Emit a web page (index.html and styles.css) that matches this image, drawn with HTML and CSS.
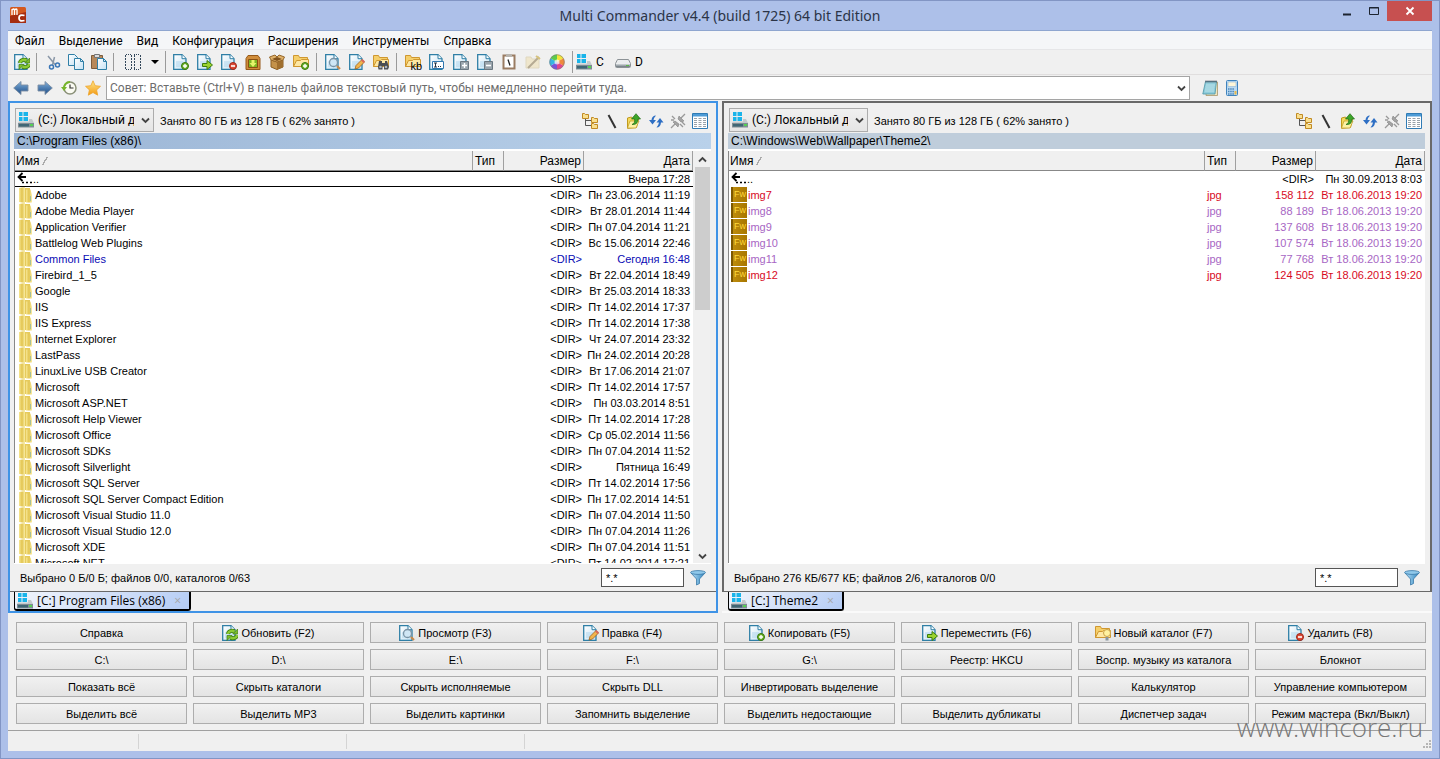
FILE: index.html
```html
<!DOCTYPE html>
<html lang="ru">
<head>
    <meta charset="UTF-8">
    <meta name="viewport" content="width=device-width, initial-scale=1.0">
    <title>Multi Commander v4.4 (build 1725) 64 bit Edition</title>
    <link rel="stylesheet" href="styles.css">
</head>
<body>
    <!-- Набор значков -->
    <svg class="sprite" aria-hidden="true">
        <defs>
            <linearGradient id="g-folder" x1="0" x2="1"><stop offset="0" stop-color="#f7e793"/><stop offset=".5" stop-color="#e2c450"/><stop offset="1" stop-color="#f9eda6"/></linearGradient>
            <linearGradient id="g-arrow" x1="0" y1="0" x2="0" y2="1"><stop offset="0" stop-color="#7fb0dc"/><stop offset="1" stop-color="#1c4b86"/></linearGradient>
            <linearGradient id="g-star" x1="0" y1="0" x2="0" y2="1"><stop offset="0" stop-color="#ffe78a"/><stop offset="1" stop-color="#f39a14"/></linearGradient>
            <linearGradient id="g-drive" x1="0" y1="0" x2="0" y2="1"><stop offset="0" stop-color="#d5dadd"/><stop offset="1" stop-color="#6b767c"/></linearGradient>
            <linearGradient id="g-doc" x1="0" y1="0" x2="1" y2="1"><stop offset="0" stop-color="#fff"/><stop offset="1" stop-color="#c4e2f4"/></linearGradient>
            <linearGradient id="g-funnel" x1="0" x2="1"><stop offset="0" stop-color="#b9e0f7"/><stop offset="1" stop-color="#2f86c0"/></linearGradient>
        </defs>
        <symbol id="doc" viewBox="0 0 16 16"><path d="M.7.7h8.300l4 4v10.600H.7z" fill="url(#g-doc)" stroke="#2f7fa6" stroke-width="1.300"/><path d="M9 .7v4h4" fill="#fff" stroke="#2f7fa6"/><path d="M3 8h7M3 10h7M3 12h7" stroke="#b0d5ec"/></symbol>
        <symbol id="folder" viewBox="0 0 16 16"><path d="M.5 1.500h5l1 2h8v9H.5z" fill="#f5cf6a" stroke="#cf9730"/><path d="M3.500 6.500h4l1-1h7v7H.5z" fill="#fde7a4" stroke="#cf9730"/></symbol>
        <symbol id="refresh" viewBox="0 0 16 16"><use href="#doc"/><g fill="none" stroke="#3b7d0c" stroke-width="4"><path d="M6 9a4 3.500 0 0 1 6.500-2.500M15 10a4 3.500 0 0 1-6.500 2.500"/></g><path d="M15.700 4v5h-5zM5 15.500v-5h5z" fill="#7dbe2a" stroke="#3b7d0c" stroke-width=".7"/><g fill="none" stroke="#8ccb34" stroke-width="2.400"><path d="M6 9a4 3.500 0 0 1 6.500-2.500M15 10a4 3.500 0 0 1-6.500 2.500"/></g></symbol>
        <symbol id="cut" viewBox="0 0 16 16"><path d="M3 2l7 8.500M9.500 3l-2 8" stroke="#8b98a8" stroke-width="1.500"/><circle cx="6.500" cy="13" r="2" fill="none" stroke="#3a76b6" stroke-width="1.500"/><circle cx="12.500" cy="11" r="2" fill="none" stroke="#3a76b6" stroke-width="1.500"/></symbol>
        <symbol id="copy" viewBox="0 0 16 16"><path d="M.5.5h6l3 3v8h-9z" fill="url(#g-doc)" stroke="#2f7fa6"/><path d="M6.500 4.500h6l3 3v8h-9z" fill="url(#g-doc)" stroke="#2f7fa6"/><path d="M12.500 4.500v3h3" fill="none" stroke="#2f7fa6"/></symbol>
        <symbol id="paste" viewBox="0 0 16 16"><path d="M.5 1.500h11v13H.5z" fill="#b8895a" stroke="#7c5c3c"/><path d="M3.500.5h5v3h-5z" fill="#ddd" stroke="#777"/><path d="M6.500 4.500h6l3 3v8h-9z" fill="url(#g-doc)" stroke="#2f7fa6"/><path d="M12.500 4.500v3h3" fill="none" stroke="#2f7fa6"/></symbol>
        <symbol id="marquee" viewBox="0 0 16 16"><path d="M.5 1v15M6.500 1v15M9.500 1v15M15.500 1v15" fill="none" stroke="#33475a" stroke-dasharray="2 1"/><path d="M1 .5h6M1 15.500h6M9 .5h6M9 15.500h6" stroke="#33475a" stroke-dasharray="1 1"/></symbol>
        <symbol id="doc-add" viewBox="0 0 16 16"><use href="#doc"/><circle cx="12" cy="12" r="3.500" fill="#6fb52c" stroke="#37760c"/><path d="M10 12h4M12 10v4" stroke="#fff" stroke-width="1.400"/></symbol>
        <symbol id="doc-move" viewBox="0 0 16 16"><use href="#doc"/><path d="M5.500 9.500h4.500v-3l5.500 4.500-5.500 4.500v-3H5.500z" fill="#9bd32f" stroke="#3d7d0c"/></symbol>
        <symbol id="doc-del" viewBox="0 0 16 16"><use href="#doc"/><circle cx="12" cy="12" r="3.500" fill="#dc4a36" stroke="#9e2618"/><path d="M10 12h4" stroke="#fff" stroke-width="1.600"/></symbol>
        <symbol id="pack" viewBox="0 0 16 16"><path d="M3 1.500h10l2 3v11H1v-11z" fill="#d08d3a" stroke="#96591a"/><path d="M3.500 5.500h9v8h-9z" fill="#7fb624" stroke="#8a5012"/><path d="M6.500 6h3v3h2L8 13 4.500 9h2z" fill="#e5f56a"/></symbol>
        <symbol id="box" viewBox="0 0 16 16"><path d="M2 6l6 2 6-2v7l-6 2.500L2 13z" fill="#c4924a" stroke="#8a5e22"/><path d="M8 8v7.500L14 13V6z" fill="#a06f2e"/><path d="M2 6L.5 3 6 1l2 2 2-2 5.500 2L14 6 8 8z" fill="#e0b26a" stroke="#94662a"/><path d="M3 5l5-2 5 2-5 2z" fill="#80521c"/></symbol>
        <symbol id="folder-add" viewBox="0 0 16 16"><use href="#folder"/><circle cx="12" cy="12" r="3.500" fill="#6fb52c" stroke="#37760c"/><path d="M10 12h4M12 10v4" stroke="#fff" stroke-width="1.400"/></symbol>
        <symbol id="view" viewBox="0 0 16 16"><use href="#doc"/><path d="M12 12l3 3" stroke="#c98a4a" stroke-width="2.200"/><circle cx="8.500" cy="8.500" r="4" fill="#cfe6f5" stroke="#7a93a5" stroke-width="1.300"/></symbol>
        <symbol id="edit" viewBox="0 0 16 16"><use href="#doc"/><path d="M6 15l1-3.500 6-6 2.500 2.500-6 6z" fill="#f2b54c" stroke="#9c5f1c" stroke-width=".8"/><path d="M12 6.500L13.500 5l2.500 2.500L14.500 9z" fill="#d9685a"/></symbol>
        <symbol id="find" viewBox="0 0 16 16"><use href="#folder"/><path d="M6 7h3v2h3V7h2l2 6-1 2.500h-4V12H9.500v3.500h-4L5 13z" fill="#4a4d52"/><circle cx="7.500" cy="13" r="1.300" fill="#aeb4bc"/><circle cx="13" cy="13" r="1.300" fill="#aeb4bc"/></symbol>
        <symbol id="rename" viewBox="0 0 16 16"><use href="#doc"/><path d="M3.500 7.500h11v7h-11z" fill="#fff" stroke="#3178b0"/><path d="M5 9h3M6.500 9v4M5 13h3M9 12.500h1M11 12.500h1" stroke="#234"/></symbol>
        <symbol id="doc-plus" viewBox="0 0 16 16"><use href="#doc"/><path d="M7.500 7.500h8v8h-8z" fill="#9aa5ad" stroke="#6b7780"/><path d="M9 11.500h5M11.500 9v5" stroke="#fff" stroke-width="1.400"/></symbol>
        <symbol id="doc-minus" viewBox="0 0 16 16"><use href="#doc"/><path d="M7.500 7.500h8v8h-8z" fill="#9aa5ad" stroke="#6b7780"/><path d="M9 11.500h5" stroke="#fff" stroke-width="1.600"/></symbol>
        <symbol id="clip" viewBox="0 0 16 16"><path d="M2.500 1.500h11v13h-11z" fill="#fff" stroke="#9a7c62" stroke-width="2"/><path d="M5 0h6v3H5z" fill="#b8b4ae"/><path d="M7 5.500l2 6" stroke="#222" stroke-width="1.300"/></symbol>
        <symbol id="wand" viewBox="0 0 16 16"><path d="M1 3h5l1 2h7v9H1z" fill="#efe6cc" stroke="#e0d8c0"/><path d="M3 14L14 3" stroke="#b5aa93" stroke-width="2"/><path d="M11 2l4 3" stroke="#d6c27c" stroke-width="2"/></symbol>
        <symbol id="wheel" viewBox="0 0 16 16"><path d="M8 8V.5A7.500 7.500 0 0 1 14.500 4.200z" fill="#f4e53a"/><path d="M8 8l6.500-3.800a7.500 7.500 0 0 1 0 7.600z" fill="#f08a3c"/><path d="M8 8l6.500 3.800A7.500 7.500 0 0 1 8 15.500z" fill="#e2468a"/><path d="M8 8v7.500a7.500 7.500 0 0 1-6.500-3.700z" fill="#7a52d8"/><path d="M8 8l-6.500 3.800a7.500 7.500 0 0 1 0-7.600z" fill="#38b5e2"/><path d="M8 8L1.500 4.200A7.500 7.500 0 0 1 8 .5z" fill="#5ecb4c"/><circle cx="8" cy="8" r="2.500" fill="#fff" opacity=".7"/><circle cx="8" cy="8" r="7.300" fill="none" stroke="#777" stroke-width=".6"/></symbol>
        <symbol id="win-drive" viewBox="0 0 16 16"><path d="M1 0h3.500v4H1zM5.500 0H10v4H5.500zM1 5h3.500v4H1zM5.500 5H10v4H5.500z" fill="#19b4ea"/><path d="M11 7h3l2 4H0l1-1.500h10z" fill="#c3c9cc"/><path d="M0 11h16v4.500H0z" fill="#7f8c94"/><path d="M1 12h10v2.500H1z" fill="#3f6675"/><path d="M12 12h3v2h-3z" fill="#54d053"/></symbol>
        <symbol id="drive" viewBox="0 0 16 16"><path d="M2.500 5.500h11l2 4v3q0 1-1 1h-13q-1 0-1-1v-3z" fill="#eceeef" stroke="#8c9296"/><path d="M1 10h14v3H1z" fill="url(#g-drive)"/><path d="M11 11.500h3" stroke="#5dbb46"/></symbol>
        <symbol id="back" viewBox="0 0 16 16"><path d="M.7 8L8 1.500V5h7v6H8v3.500z" fill="url(#g-arrow)" stroke="#7b8ca2" stroke-width=".9"/></symbol>
        <symbol id="forward" viewBox="0 0 16 16"><path d="M15.300 8L8 1.500V5H1v6h7v3.500z" fill="url(#g-arrow)" stroke="#7b8ca2" stroke-width=".9"/></symbol>
        <symbol id="history" viewBox="0 0 16 16"><circle cx="9" cy="8" r="6" fill="#fbfbf3" stroke="#8a9078" stroke-width="1.500"/><path d="M9 4.500V8h3.500" fill="none" stroke="#333" stroke-width="1.200"/><path d="M3 9A6 6 0 0 1 9 2" fill="none" stroke="#76b52b" stroke-width="2"/><path d="M0 7h6l-3 4z" fill="#76b52b"/></symbol>
        <symbol id="star" viewBox="0 0 16 16"><path d="M8 .8l2.200 4.900 5.300.6-3.900 3.600 1.100 5.300L8 12.500l-4.700 2.700 1.100-5.300L.5 6.300l5.300-.6z" fill="url(#g-star)" stroke="#eda42c" stroke-width=".8"/></symbol>
        <symbol id="notepad" viewBox="0 0 16 16"><path d="M5 2h10.500v13.500H4z" fill="#efe5c0" stroke="#a8966a" stroke-width=".8"/><path d="M3.500 1.500h11l-1.500 12.500H.8z" fill="#8fcddb" stroke="#4d94a6" stroke-width=".8"/><path d="M4 5h9M3.500 7h9M3 9h9M3 11h9" stroke="#d2edf2" stroke-width=".7"/><path d="M4 .5v2M6 .5v2M8 .5v2M10 .5v2M12 .5v2M14 .5v2" stroke="#445"/></symbol>
        <symbol id="calc" viewBox="0 0 16 16"><rect x="2.500" y=".5" width="11" height="15" rx="1" fill="#b9d9f2" stroke="#3f83bd"/><path d="M4 2h8v4.500H4z" fill="#fff6d8" stroke="#8fb6d8" stroke-width=".6"/><path d="M4 9h6M4 11.500h6M4 14h6" stroke="#4d86b8" stroke-width="1.500" stroke-dasharray="1.500 .7"/><path d="M10.500 11h2v3.500h-2z" fill="#e8b84a"/></symbol>
        <symbol id="tree" viewBox="0 0 16 16"><path d="M3.500 6v6.500H9M3.500 7.500H9" fill="none" stroke="#555"/><g fill="#f9df8e" stroke="#c08a24"><path d="M.5.5h2l1 1h3v4h-6zM9.500 4.500h2l1 1h3v4h-6zM9.500 10.500h2l1 1h3v4h-6z"/></g></symbol>
        <symbol id="slash" viewBox="0 0 16 16"><path d="M4.500 2l7 13" stroke="#333" stroke-width="2"/></symbol>
        <symbol id="up" viewBox="0 0 16 16"><path d="M1.500 5l4-1 1 1.500h6l-2 9-9 .8z" fill="#f5d95c" stroke="#c09a1e"/><path d="M4 8h9l-3 7H1.500z" fill="#fdf1a4" stroke="#c09a1e" stroke-width=".7"/><path d="M6 11.500Q9.500 10 8.500 6H5.500L10 .7 14.500 6H12q0 6-6 5.500z" fill="#3ea52a" stroke="#216d14" stroke-width=".7"/></symbol>
        <symbol id="sync" viewBox="0 0 16 16"><path d="M8 2.500Q4 2.500 3.500 7H1l3.500 4.500L8 7H5.500Q6 4.500 8 2.500z" fill="#2e6fc4"/><path d="M8.500 14.500q4 0 4.500-5h2.500L12 5 8.500 9.500H11q-.5 3-2.500 5z" fill="#2e6fc4"/></symbol>
        <symbol id="unplug" viewBox="0 0 16 16"><path d="M15 1l-4 4M1 15l4-4M2 3l3 3M1 7h3M12 9l3 3M10 11l3 3" stroke="#999" stroke-width="1.300"/><path d="M9 3l5 5-3 1-3-3zM3 9l5 5 1-3-4-3z" fill="#a3a3a3" stroke="#777" stroke-width=".5"/></symbol>
        <symbol id="grid" viewBox="0 0 16 16"><path d="M.5.5h15v15H.5z" fill="#fff" stroke="#2f7bb5"/><path d="M1 1h14v2.500H1z" fill="#4d9bd6"/><path d="M2 5.500h3M6.500 5.500h3M11 5.500h3M2 7.500h3M6.500 7.500h3M11 7.500h3M2 9.500h3M6.500 9.500h3M11 9.500h3M2 11.500h3M6.500 11.500h3M11 11.500h3M2 13.500h3M6.500 13.500h3M11 13.500h3" stroke="#99a2aa"/></symbol>
        <symbol id="row-folder" viewBox="0 0 16 16"><path d="M0 1l6-1v16l-6-1z" fill="url(#g-folder)"/><path d="M6 1h5v14H6z" fill="#e6ca5c"/><path d="M7 2.500h4.500L13 8v7.500H7z" fill="url(#g-folder)"/><path d="M11.500 9v5" stroke="#a5bf9c"/></symbol>
        <symbol id="row-up" viewBox="0 0 16 16"><path d="M9 6H2M5.500 2L1.500 6l4 4" fill="none" stroke="#000" stroke-width="1.800"/><path d="M5 11.500h2M9 11.500h2M13 11.500h2" stroke="#000" stroke-width="1.500"/></symbol>
        <symbol id="bulb" viewBox="0 0 16 16"><use href="#folder"/><circle cx="12" cy="8" r="3.500" fill="#fff1a0" stroke="#c9a24a"/><path d="M10.500 12h3v3.500h-3z" fill="#8a96a0"/></symbol>
        <symbol id="funnel" viewBox="0 0 16 16"><path d="M1 3l5.500 6v6l3-1.500V9L15 3z" fill="url(#g-funnel)" stroke="#3b7aa8" stroke-width=".8"/><ellipse cx="8" cy="2.500" rx="7.500" ry="1.900" fill="#8fc8ea" stroke="#3b7aa8" stroke-width=".8"/></symbol>
        <symbol id="chevron" viewBox="0 0 9 9"><path d="M1 2.500l3.500 3.500L8 2.500" fill="none" stroke="#444" stroke-width="1.800"/></symbol>
        <symbol id="logo" viewBox="0 0 16 16"><rect width="16" height="16" rx="1.500" fill="#d4581f"/><path d="M0 9L16 5v11H0z" fill="#a52c10"/><path d="M2 8V2M2 3q2-2 2.500 0v5M4.500 3Q7 1 7 3v5" fill="none" stroke="#fff" stroke-width="1.300"/><path d="M14.500 8.500q-5.500-1.500-5.500 2.500t5.500 2.500" fill="none" stroke="#fff" stroke-width="1.800"/></symbol>
    </svg>

    <div class="window">
        <header class="titlebar">
            <svg class="icon logo"><use href="#logo"/></svg>
            <h1>Multi Commander v4.4 (build 1725) 64 bit Edition</h1>
            <div class="window-controls">
                <button class="minimize" aria-label="Свернуть"><svg viewBox="0 0 10 10"><path d="M1 8.500h8" stroke="#1d2430" stroke-width="2"/></svg></button>
                <button class="maximize" aria-label="Развернуть"><svg viewBox="0 0 10 10"><path d="M.5 1.500h9v7h-9zM0 2h10" fill="none" stroke="#1d2430"/></svg></button>
                <button class="close" aria-label="Закрыть"><svg viewBox="0 0 10 10"><path d="M1.500 1.500l7 7M8.500 1.500l-7 7" stroke="#fff" stroke-width="1.800"/></svg></button>
            </div>
        </header>

        <main class="client">
            <nav class="menu">
                <a href="#">Файл</a>
                <a href="#">Выделение</a>
                <a href="#">Вид</a>
                <a href="#">Конфигурация</a>
                <a href="#">Расширения</a>
                <a href="#">Инструменты</a>
                <a href="#">Справка</a>
            </nav>

            <div class="toolbar">
                <button class="tool narrow" aria-label="Обновить"><svg class="icon"><use href="#refresh"/></svg></button>
                <span class="sep"></span>
                <button class="tool narrow" aria-label="Вырезать"><svg class="icon"><use href="#cut"/></svg></button>
                <button class="tool narrow" aria-label="Копировать"><svg class="icon"><use href="#copy"/></svg></button>
                <button class="tool narrow" aria-label="Вставить"><svg class="icon"><use href="#paste"/></svg></button>
                <span class="sep"></span>
                <button class="tool wide" aria-label="Выделить"><svg class="icon"><use href="#marquee"/></svg></button>
                <button class="tool drop" aria-label="Ещё"><span class="caret"></span></button>
                <span class="sep grip"></span>
                <button class="tool" aria-label="Новый файл"><svg class="icon"><use href="#doc-add"/></svg></button>
                <button class="tool" aria-label="Переместить"><svg class="icon"><use href="#doc-move"/></svg></button>
                <button class="tool" aria-label="Удалить"><svg class="icon"><use href="#doc-del"/></svg></button>
                <button class="tool" aria-label="Упаковать"><svg class="icon"><use href="#pack"/></svg></button>
                <button class="tool" aria-label="Распаковать"><svg class="icon"><use href="#box"/></svg></button>
                <button class="tool" aria-label="Новый каталог"><svg class="icon"><use href="#folder-add"/></svg></button>
                <span class="sep"></span>
                <button class="tool" aria-label="Просмотр"><svg class="icon"><use href="#view"/></svg></button>
                <button class="tool" aria-label="Правка"><svg class="icon"><use href="#edit"/></svg></button>
                <button class="tool" aria-label="Поиск"><svg class="icon"><use href="#find"/></svg></button>
                <span class="sep"></span>
                <button class="tool kb" aria-label="Размер"><svg class="icon"><use href="#folder"/></svg><span>kb</span></button>
                <button class="tool" aria-label="Переименовать"><svg class="icon"><use href="#rename"/></svg></button>
                <button class="tool" aria-label="Выделить файлы"><svg class="icon"><use href="#doc-plus"/></svg></button>
                <button class="tool" aria-label="Снять выделение"><svg class="icon"><use href="#doc-minus"/></svg></button>
                <button class="tool" aria-label="Копировать путь"><svg class="icon"><use href="#clip"/></svg></button>
                <button class="tool" aria-label="Мастер"><svg class="icon"><use href="#wand"/></svg></button>
                <button class="tool" aria-label="Цвета"><svg class="icon"><use href="#wheel"/></svg></button>
                <span class="sep grip"></span>
                <button class="tool disk"><svg class="icon"><use href="#win-drive"/></svg>C</button>
                <button class="tool disk"><svg class="icon"><use href="#drive"/></svg>D</button>
            </div>

            <div class="address">
                <button class="tool" aria-label="Назад"><svg class="icon"><use href="#back"/></svg></button>
                <button class="tool" aria-label="Вперёд"><svg class="icon"><use href="#forward"/></svg></button>
                <button class="tool" aria-label="История"><svg class="icon"><use href="#history"/></svg></button>
                <button class="tool" aria-label="Избранное"><svg class="icon"><use href="#star"/></svg></button>
                <div class="combo">
                    <input type="text" aria-label="Путь" placeholder="Совет: Вставьте (Ctrl+V) в панель файлов текстовый путь, чтобы немедленно перейти туда.">
                    <button aria-label="Список"><svg class="chevron"><use href="#chevron"/></svg></button>
                </div>
                <div class="apps">
                    <button class="tool" aria-label="Блокнот"><svg class="icon"><use href="#notepad"/></svg></button>
                    <button class="tool" aria-label="Калькулятор"><svg class="icon"><use href="#calc"/></svg></button>
                </div>
            </div>

            <div class="panels">
                <section class="panel active">
                    <div class="panel-inner">
                        <div class="panel-head">
                            <label class="disk-select">
                                <svg class="icon"><use href="#win-drive"/></svg>
                                <select aria-label="Диск"><option>(C:) Локальный диск</option></select>
                                <svg class="chevron"><use href="#chevron"/></svg>
                            </label>
                            <span class="usage">Занято 80 ГБ из 128 ГБ ( 62% занято )</span>
                            <div class="panel-tools">
                                <button aria-label="Дерево"><svg class="icon"><use href="#tree"/></svg></button>
                                <button aria-label="Корень"><svg class="icon"><use href="#slash"/></svg></button>
                                <button aria-label="Вверх"><svg class="icon"><use href="#up"/></svg></button>
                                <button aria-label="Обновить"><svg class="icon"><use href="#sync"/></svg></button>
                                <button aria-label="Отключить"><svg class="icon"><use href="#unplug"/></svg></button>
                                <button aria-label="Вид"><svg class="icon"><use href="#grid"/></svg></button>
                            </div>
                        </div>
                        <div class="path">C:\Program Files (x86)\</div>
                        <div class="list">
                            <div class="list-view">
                                <table>
                                    <thead><tr><th class="name">Имя<span class="sort"></span></th><th class="type">Тип</th><th class="size">Размер</th><th class="date">Дата</th></tr></thead>
                                    <tbody id="leftFiles"></tbody>
                                </table>
                            </div>
                            <div class="scrollbar">
                                <svg class="chevron flip"><use href="#chevron"/></svg>
                                <div class="thumb"></div>
                                <svg class="chevron"><use href="#chevron"/></svg>
                            </div>
                        </div>
                        <div class="summary">
                            <span>Выбрано 0 Б/0 Б; файлов 0/0, каталогов 0/63</span>
                            <input type="text" aria-label="Фильтр" value="*.*">
                            <button aria-label="Применить фильтр"><svg class="icon"><use href="#funnel"/></svg></button>
                        </div>
                    </div>
                    <div class="tabs">
                        <button class="tab"><svg class="icon"><use href="#win-drive"/></svg>[C:] Program Files (x86)<span class="tab-close">×</span></button>
                    </div>
                </section>

                <section class="panel">
                    <div class="panel-inner">
                        <div class="panel-head">
                            <label class="disk-select">
                                <svg class="icon"><use href="#win-drive"/></svg>
                                <select aria-label="Диск"><option>(C:) Локальный диск</option></select>
                                <svg class="chevron"><use href="#chevron"/></svg>
                            </label>
                            <span class="usage">Занято 80 ГБ из 128 ГБ ( 62% занято )</span>
                            <div class="panel-tools">
                                <button aria-label="Дерево"><svg class="icon"><use href="#tree"/></svg></button>
                                <button aria-label="Корень"><svg class="icon"><use href="#slash"/></svg></button>
                                <button aria-label="Вверх"><svg class="icon"><use href="#up"/></svg></button>
                                <button aria-label="Обновить"><svg class="icon"><use href="#sync"/></svg></button>
                                <button aria-label="Отключить"><svg class="icon"><use href="#unplug"/></svg></button>
                                <button aria-label="Вид"><svg class="icon"><use href="#grid"/></svg></button>
                            </div>
                        </div>
                        <div class="path">C:\Windows\Web\Wallpaper\Theme2\</div>
                        <div class="list">
                            <div class="list-view">
                                <table>
                                    <thead><tr><th class="name">Имя<span class="sort"></span></th><th class="type">Тип</th><th class="size">Размер</th><th class="date">Дата</th></tr></thead>
                                    <tbody id="rightFiles"></tbody>
                                </table>
                            </div>
                        </div>
                        <div class="summary">
                            <span>Выбрано 276 КБ/677 КБ; файлов 2/6, каталогов 0/0</span>
                            <input type="text" aria-label="Фильтр" value="*.*">
                            <button aria-label="Применить фильтр"><svg class="icon"><use href="#funnel"/></svg></button>
                        </div>
                    </div>
                    <div class="tabs">
                        <button class="tab"><svg class="icon"><use href="#win-drive"/></svg>[C:] Theme2<span class="tab-close">×</span></button>
                    </div>
                </section>
            </div>

            <div class="commands">
                <button>Справка</button>
                <button class="with-icon"><svg class="icon"><use href="#refresh"/></svg>Обновить (F2)</button>
                <button class="with-icon"><svg class="icon"><use href="#view"/></svg>Просмотр (F3)</button>
                <button class="with-icon"><svg class="icon"><use href="#edit"/></svg>Правка (F4)</button>
                <button class="with-icon"><svg class="icon"><use href="#doc-add"/></svg>Копировать (F5)</button>
                <button class="with-icon"><svg class="icon"><use href="#doc-move"/></svg>Переместить (F6)</button>
                <button class="with-icon"><svg class="icon"><use href="#bulb"/></svg>Новый каталог (F7)</button>
                <button class="with-icon"><svg class="icon"><use href="#doc-del"/></svg>Удалить (F8)</button>
                <button>C:\</button>
                <button>D:\</button>
                <button>E:\</button>
                <button>F:\</button>
                <button>G:\</button>
                <button>Реестр: HKCU</button>
                <button>Воспр. музыку из каталога</button>
                <button>Блокнот</button>
                <button>Показать всё</button>
                <button>Скрыть каталоги</button>
                <button>Скрыть исполняемые</button>
                <button>Скрыть DLL</button>
                <button>Инвертировать выделение</button>
                <button aria-label="Пусто"></button>
                <button>Калькулятор</button>
                <button>Управление компьютером</button>
                <button>Выделить всё</button>
                <button>Выделить MP3</button>
                <button>Выделить картинки</button>
                <button>Запомнить выделение</button>
                <button>Выделить недостающие</button>
                <button>Выделить дубликаты</button>
                <button>Диспетчер задач</button>
                <button>Режим мастера (Вкл/Выкл)</button>
            </div>

            <footer class="statusbar">
                <span class="cell first"></span>
                <span class="cell second"></span>
                <span class="cell third"></span>
                <svg class="resize" viewBox="0 0 9 9"><path d="M7 1h2M4 4h2M7 4h2M1 7h2M4 7h2M7 7h2" stroke="#b5b5b5" stroke-width="2"/></svg>
            </footer>
        </main>
        <div class="watermark">www.wincore.ru</div>
    </div>

    <script>
        // имя, дата
        const folders = [
            ["Adobe", "Пн 23.06.2014 11:19"],
            ["Adobe Media Player", "Вт 28.01.2014 11:44"],
            ["Application Verifier", "Пн 07.04.2014 11:21"],
            ["Battlelog Web Plugins", "Вс 15.06.2014 22:46"],
            ["Common Files", "Сегодня 16:48", "today"],
            ["Firebird_1_5", "Вт 22.04.2014 18:49"],
            ["Google", "Вт 25.03.2014 18:33"],
            ["IIS", "Пт 14.02.2014 17:37"],
            ["IIS Express", "Пт 14.02.2014 17:38"],
            ["Internet Explorer", "Чт 24.07.2014 23:32"],
            ["LastPass", "Пн 24.02.2014 20:28"],
            ["LinuxLive USB Creator", "Вт 17.06.2014 21:07"],
            ["Microsoft", "Пт 14.02.2014 17:57"],
            ["Microsoft ASP.NET", "Пн 03.03.2014 8:51"],
            ["Microsoft Help Viewer", "Пт 14.02.2014 17:28"],
            ["Microsoft Office", "Ср 05.02.2014 11:56"],
            ["Microsoft SDKs", "Пн 07.04.2014 11:52"],
            ["Microsoft Silverlight", "Пятница 16:49"],
            ["Microsoft SQL Server", "Пт 14.02.2014 17:56"],
            ["Microsoft SQL Server Compact Edition", "Пн 17.02.2014 14:51"],
            ["Microsoft Visual Studio 11.0", "Пн 07.04.2014 11:50"],
            ["Microsoft Visual Studio 12.0", "Пн 07.04.2014 11:26"],
            ["Microsoft XDE", "Пн 07.04.2014 11:51"],
            ["Microsoft.NET", "Пт 14.02.2014 17:21"]
        ];

        // имя, размер, класс
        const images = [
            ["img7", "158 112", "selected"],
            ["img8", "88 189", "image"],
            ["img9", "137 608", "image"],
            ["img10", "107 574", "image"],
            ["img11", "77 768", "image"],
            ["img12", "124 505", "selected"]
        ];

        function icon(id) {
            return `<svg class="icon"><use href="#${id}"/></svg>`;
        }

        function row(icon, name, type, size, date, cls) {
            return `<tr class="${cls || ""}">
                <td class="name"><div>${icon}${name}</div></td>
                <td class="type">${type}</td>
                <td class="size">${size}</td>
                <td class="date">${date}</td>
            </tr>`;
        }

        document.getElementById("leftFiles").innerHTML =
            row(icon("row-up"), "..", "", "&lt;DIR&gt;", "Вчера 17:28", "parent cursor") +
            folders.map(f => row(icon("row-folder"), f[0], "", "&lt;DIR&gt;", f[1], f[2])).join("");

        document.getElementById("rightFiles").innerHTML =
            row(icon("row-up"), "..", "", "&lt;DIR&gt;", "Пн 30.09.2013 8:03", "parent") +
            images.map(f => row('<span class="fw">Fw</span>', f[0], "jpg", f[1], "Вт 18.06.2013 19:20", "file " + f[2])).join("");
    </script>
</body>
</html>
```

FILE: styles.css
```css
* {
    box-sizing: border-box;
}

body {
    margin: 0;
    height: 100vh;
    font-family: 'Liberation Sans', Arial, sans-serif;
    font-size: 11px;
    color: #000;
}

button,
input,
select {
    font: inherit;
    color: inherit;
    margin: 0;
}

button {
    display: flex;
    align-items: center;
    justify-content: center;
    padding: 0;
    border: none;
    background: none;
}

.sprite {
    position: absolute;
    width: 0;
    height: 0;
}

.icon {
    width: 16px;
    height: 16px;
    flex: none;
}

.chevron {
    width: 9px;
    height: 9px;
    flex: none;
}

/* Окно */
.window {
    position: relative;
    display: flex;
    flex-direction: column;
    height: 100%;
    padding: 0 7px 7px;
    border: 1px solid #8295c4;
    background: #adc0e9;
}

.titlebar {
    display: flex;
    align-items: flex-start;
    height: 29px;
    flex: none;
}

.titlebar .logo {
    margin: 6px 0 0 2px;
}

.titlebar h1 {
    flex: 1;
    margin: 0;
    padding-left: 81px;
    font-family: 'Noto Sans', 'Open Sans', sans-serif;
    font-size: 14px;
    font-weight: normal;
    line-height: 29px;
    text-align: center;
    color: #2b3447;
}

.window-controls {
    display: flex;
}

.window-controls button {
    width: 27px;
    height: 20px;
}

.window-controls svg {
    width: 10px;
    height: 10px;
}

.window-controls .close {
    width: 45px;
    background: #c75050;
}

.client {
    display: flex;
    flex-direction: column;
    flex: 1;
    min-height: 0;
    border-top: 1px solid #8fa6d0;
    background: #f0f0f0;
}

.menu {
    display: flex;
    gap: 14px;
    height: 19px;
    padding-left: 7px;
    flex: none;
    background: #f5f6f8;
    border-bottom: 1px solid #e6e6e8;
    font-family: Roboto, 'Open Sans', sans-serif;
    font-size: 12px;
    line-height: 20px;
}

.menu a {
    color: #000;
    text-decoration: none;
}

/* Панели инструментов */
.toolbar {
    display: flex;
    align-items: center;
    height: 25px;
    padding-left: 2px;
    flex: none;
    border-bottom: 1px solid #e0dede;
}

.tool {
    width: 24px;
    height: 24px;
    flex: none;
}

.tool.narrow {
    width: 23px;
}

.tool.wide {
    width: 30px;
}

.tool.drop {
    width: 14px;
}

.tool.disk {
    gap: 4px;
    justify-content: flex-start;
    width: 39px;
    font-family: Roboto, 'Open Sans', sans-serif;
    font-size: 12px;
}

/* подпись поверх папки */
.tool.kb {
    position: relative;
}

.tool.kb span {
    position: absolute;
    right: 3px;
    bottom: 2px;
    line-height: 12px;
}

.caret {
    border: 4px solid transparent;
    border-top-color: #000;
    border-bottom: none;
}

.sep {
    width: 8px;
    height: 18px;
    flex: none;
    background: linear-gradient(#9a9a9a, #9a9a9a) 3px 0 / 1px 100% no-repeat;
}

.sep.grip {
    width: 7px;
    height: 22px;
}

.address {
    display: flex;
    align-items: center;
    height: 26px;
    padding-left: 1px;
    flex: none;
}

.combo {
    display: flex;
    flex: 1;
    height: 24px;
    margin-left: 1px;
    border: 1px solid #a5a5a5;
    background: #fff;
}

.combo input {
    flex: 1;
    min-width: 0;
    padding: 0 3px;
    border: none;
    outline: none;
    background: none;
    font-family: Roboto, 'Open Sans', sans-serif;
    font-size: 12px;
}

.combo input::placeholder {
    color: #6d6d6d;
    opacity: 1;
}

.combo button {
    width: 16px;
}

.apps {
    display: flex;
    width: 242px;
    padding-left: 9px;
}

.apps .tool {
    width: 22px;
}

/* Файловые панели */
.panels {
    display: grid;
    grid-template-columns: repeat(2, minmax(0, 1fr));
    gap: 4px;
    flex: 1;
    min-height: 0;
}

.panel {
    display: flex;
    flex-direction: column;
    min-width: 0;
    min-height: 0;
    border-bottom: 2px solid #fafafa;
}

.panel-inner {
    display: flex;
    flex-direction: column;
    flex: 1;
    min-height: 0;
    padding: 4px 5px 0 4px;
    border: 2px solid #696969;
    border-bottom-width: 1px;
}

.panel.active {
    border: 2px solid #3f93e6;
}

.panel.active .panel-inner {
    border-width: 0 0 1px;
}

.panel-head {
    display: flex;
    align-items: center;
    height: 26px;
    flex: none;
}

.disk-select {
    position: relative;
    width: 139px;
    height: 24px;
    margin-left: 1px;
}

.disk-select .icon {
    position: absolute;
    left: 3px;
    top: 4px;
    pointer-events: none;
}

.disk-select .chevron {
    position: absolute;
    right: 4px;
    top: 8px;
    pointer-events: none;
}

.disk-select select {
    width: 100%;
    height: 100%;
    padding: 0 19px 0 22px;
    border: 1px solid #acacac;
    border-radius: 0;
    appearance: none;
    background: linear-gradient(#f0f0f0, #e5e5e5);
    font-family: Roboto, 'Open Sans', sans-serif;
    font-size: 12px;
}

.usage {
    flex: 1;
    padding: 2px 0 0 6px;
}

.panel-tools {
    display: flex;
    padding-top: 2px;
}

.panel-tools button {
    width: 22px;
    height: 22px;
}

.path {
    height: 17px;
    padding-left: 3px;
    flex: none;
    background: #bfcddb;
    border-bottom: 1px solid #fff;
    font-size: 12px;
    line-height: 17px;
}

.active .path {
    background: linear-gradient(90deg, #9bb5d5, #b9d1ea);
}

.list {
    display: flex;
    flex: 1;
    min-height: 0;
    border-top: 1px solid #fff;
    border-bottom: 1px solid #fff;
}

.list-view {
    flex: 1;
    min-width: 0;
    overflow: hidden;
    background: linear-gradient(#f0f0f0, #f0f0f0) 0 0 / 100% 20px no-repeat, #fff;
    border-left: 1px solid #888;
}

.list table {
    width: 100%;
    border-spacing: 0;
    table-layout: fixed;
}

.list th {
    height: 20px;
    padding: 0 2px;
    border-right: 1px solid #a0a0a0;
    border-bottom: 1px solid #888;
    font-size: 12px;
    font-weight: normal;
    line-height: 18px;
    text-align: left;
}

.list th.name {
    padding-left: 1px;
}

.list th.type {
    width: 31px;
}

.list th.size {
    width: 80px;
    text-align: right;
}

.list th.date {
    width: 109px;
    text-align: right;
}

.sort {
    display: inline-block;
    width: 6px;
    height: 8px;
    margin-left: 3px;
    background: linear-gradient(120deg, transparent 42%, #aaa 42%, #aaa 56%, transparent 56%);
}

.list td {
    height: 16px;
    padding: 0 2px;
    line-height: 16px;
    white-space: nowrap;
}

.list td.name {
    padding-left: 4px;
}

.list td.name div {
    display: flex;
    height: 16px;
}

.list td.size,
.list td.date {
    text-align: right;
}

.list td.date {
    padding-right: 3px;
}

.list .cursor td {
    box-shadow: inset 0 1px #000, inset 0 -1px #000;
}

.list .parent td.name,
.list .file td.name {
    padding-left: 2px;
}

.fw {
    width: 16px;
    height: 15px;
    margin-right: 1px;
    padding-left: 3px;
    background: linear-gradient(90deg, #7d5800 2px, #bd8c0c 2px, #a87600);
    color: #ffd83a;
    font-size: 9px;
    line-height: 15px;
}

.today {
    color: #0a0ab4;
}

.selected {
    color: #d80a1e;
}

.image {
    color: #a766c4;
}

.scrollbar {
    display: flex;
    flex-direction: column;
    align-items: center;
    width: 18px;
    padding: 4px 1px 2px 2px;
    background: #f0f0f0;
}

.scrollbar .flip {
    transform: rotate(180deg);
}

.scrollbar .thumb {
    width: 100%;
    height: 143px;
    margin: 3px 0 auto;
    background: #cdcdcd;
}

.summary {
    display: flex;
    align-items: center;
    height: 27px;
    padding-left: 6px;
    flex: none;
}

.summary span {
    flex: 1;
}

.summary input {
    width: 83px;
    height: 19px;
    padding: 0 4px;
    border: 1px solid #555;
    background: #fff;
}

.summary button {
    width: 26px;
    margin-left: 1px;
}

.tabs {
    display: flex;
    height: 19px;
    padding-left: 4px;
    flex: none;
}

.tab {
    height: 19px;
    padding: 0 8px 0 2px;
    border: 1px solid #000;
    border-width: 0 2px 2px 1px;
    border-radius: 0 0 3px 3px;
    background: linear-gradient(135deg, #f2f5fb, #b4ccf5);
    font-family: 'Open Sans', 'Noto Sans', sans-serif;
    font-size: 12px;
}

.panel:not(.active) .tabs {
    padding-left: 6px;
}

.tab .icon {
    margin-right: 4px;
}

.tab-close {
    margin-left: 9px;
    color: #a5a5a5;
}

/* Кнопки команд */
.commands {
    display: grid;
    grid-template-columns: repeat(8, 1fr);
    gap: 6px;
    padding: 9px 6px 6px 8px;
    flex: none;
}

.commands button {
    gap: 3px;
    height: 21px;
    min-width: 0;
    border: 1px solid #adadad;
    background: linear-gradient(#f1f1f1, #e4e4e4);
    white-space: nowrap;
}

.commands .with-icon {
    padding-right: 20px;
}

.statusbar {
    display: flex;
    height: 21px;
    padding: 3px 1px 2px 0;
    flex: none;
    border-top: 1px solid #a0a0a0;
}

.cell {
    border-right: 1px solid #d4d4d4;
}

.cell.first {
    width: 131px;
}

.cell.second {
    width: 208px;
}

.cell.third {
    width: 178px;
}

.resize {
    width: 9px;
    height: 9px;
    margin: auto 0 0 auto;
}

.watermark {
    position: absolute;
    right: 16px;
    bottom: 13px;
    font-family: 'Open Sans', 'Noto Sans', sans-serif;
    font-size: 26px;
    font-weight: 300;
    line-height: 36px;
    color: #777;
    pointer-events: none;
}
```
